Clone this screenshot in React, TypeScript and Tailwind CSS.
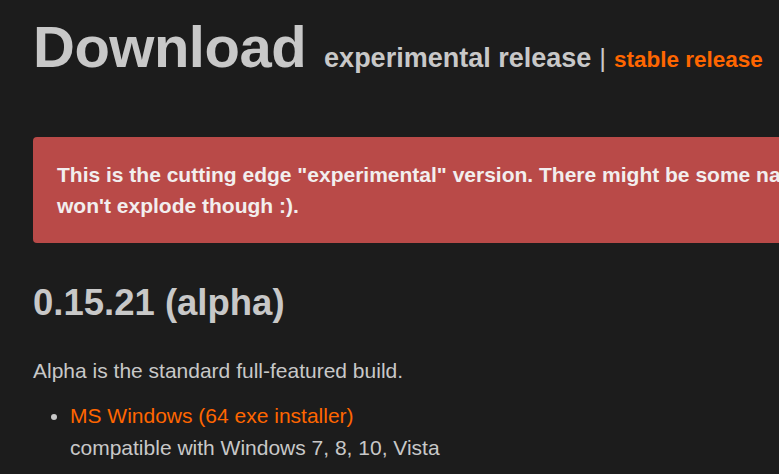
import React from "react";

export default function App() {
  return (
    <div className="w-[779px] h-[474px] overflow-hidden bg-[#1c1c1c] text-[#c8c8c8]" style={{ fontFamily: '"Liberation Sans", Arial, sans-serif' }}>
      <div className="w-[1140px] pl-[33px] pt-[15px]">
        <h1 className="flex items-baseline font-bold leading-[1.1]">
          <span className="text-[58px] tracking-[-0.5px]">Download</span>
          <span className="ml-[18px] text-[27px] text-[#c8c8c8]">experimental release</span>
          <span className="ml-[8px] text-[26px] text-[#c8c8c8] font-normal">|</span>
          <a className="ml-[8px] text-[22.5px] text-[#ff6600]">stable release</a>
        </h1>
        <div className="mt-[58px] whitespace-nowrap rounded-[4px] bg-[#b94a48] px-[24px] py-[22px] text-[21px] font-bold leading-[31px] text-[#f2eeee]">
          This is the cutting edge "experimental" version. There might be some nasty bugs lurking around, but hopefully your computer
          <br />
          won't explode though :).
        </div>
        <h2 className="mt-[40px] text-[36.5px] font-bold leading-[1.1]">0.15.21 (alpha)</h2>
        <p className="mt-[33px] text-[21px] leading-[30px]">Alpha is the standard full-featured build.</p>
        <ul className="mt-[14px] pl-[37px] list-disc text-[21px] leading-[32px]">
          <li>
            <a className="text-[#ff6600]">MS Windows (64 exe installer)</a>
            <br />
            compatible with Windows 7, 8, 10, Vista
          </li>
        </ul>
      </div>
    </div>
  );
}
